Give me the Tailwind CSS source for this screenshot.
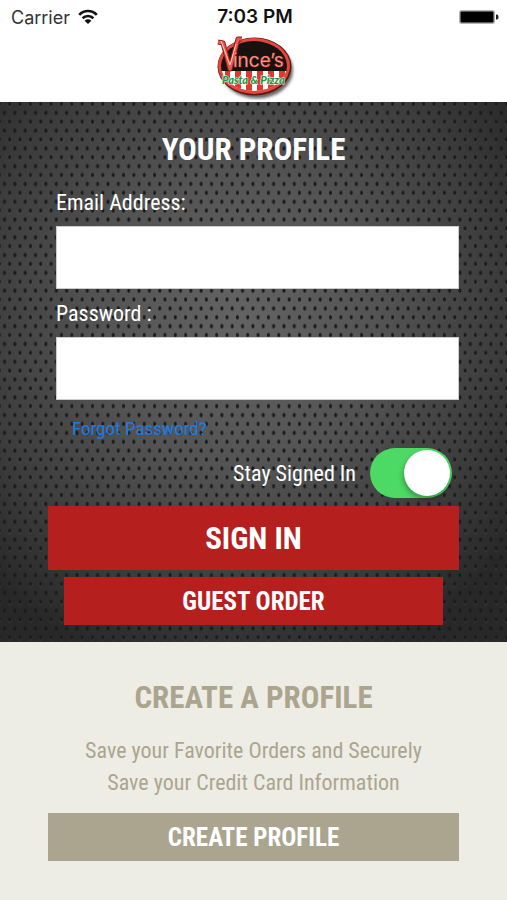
<!DOCTYPE html>
<html lang="en">
<head>
<meta charset="utf-8">
<meta name="viewport" content="width=device-width, initial-scale=1">
<title>Your Profile</title>
<script src="https://cdn.jsdelivr.net/npm/@tailwindcss/browser@4"></script>
</head>
<body class="min-h-screen flex flex-col bg-[#eeede5] font-['Roboto_Condensed','Roboto',sans-serif]">

<header class="h-[102px] bg-white flex flex-col">
  <div class="h-[34px] pl-[11px] pr-2 grid grid-cols-3 items-center font-['Inter',sans-serif] text-[#111]">
    <div class="flex items-center gap-2 text-[18px] text-[#333]">
      <span>Carrier</span>
      <svg class="w-5 h-4" viewBox="0 0 20 16" fill="none" stroke="#111" stroke-width="2.6" aria-label="Wi-Fi">
        <path d="M1.2 5.8C6.2.7 13.8.7 18.8 5.8"/>
        <path d="M4.6 9.3c3.1-3 7.7-3 10.8 0"/>
        <path d="M10 15 6.6 11.7c2-1.8 4.800-1.8 6.800 0Z" fill="#111" stroke="none"/>
      </svg>
    </div>
    <div class="text-center text-[19px] font-semibold whitespace-nowrap">7:03 PM</div>
    <svg class="w-10 h-4 justify-self-end" viewBox="0 0 40 16" aria-label="Battery">
      <rect x="0" y="1" width="36" height="14" rx="2.5" fill="#b5b5b5"/>
      <rect x="1.500" y="2.5" width="33" height="11" rx="1" fill="#000"/>
      <path d="M37 5.500h1q1.500 0 1.500 2.500t-1.500 2.500h-1z" fill="#222"/>
    </svg>
  </div>
  <svg class="w-[84px] h-[66px] mx-auto" viewBox="0 0 84 66" role="img" aria-label="Vince's Pasta &amp; Pizza">
    <defs>
      <clipPath id="plate"><ellipse cx="42" cy="32" rx="33" ry="25"/></clipPath>
      <filter id="soft" x="-20%" y="-20%" width="140%" height="140%"><feGaussianBlur stdDeviation="1.500"/></filter>
    </defs>
    <ellipse cx="45" cy="36" rx="36" ry="28.500" fill="#333" opacity=".75" filter="url(#soft)"/>
    <ellipse cx="42.500" cy="32.500" rx="37" ry="29" fill="#5c1512"/>
    <ellipse cx="42" cy="32" rx="36" ry="28" fill="#e2473c"/>
    <g clip-path="url(#plate)">
      <rect width="84" height="66" fill="#17120f"/>
      <rect y="37" width="84" height="30" fill="#fff"/>
      <path d="M13 37h5v24h-5zM23 37h6v24h-6zM34 37h6v24h-6zM45 37h6v24h-6zM56 37h6v24h-6zM67 37h6v24h-6z" fill="#dc3a30"/>
    </g>
    <path d="M6 8 11 9 18 35 26 5 30 5" fill="none" stroke="#8f1a15" stroke-width="5" stroke-linejoin="round"/>
    <path d="M6 8 11 9 18 35 26 5 30 5" fill="none" stroke="#e8594f" stroke-width="3" stroke-linejoin="round"/>
    <path d="M9 7 18 31 24 10" fill="none" stroke="#ffd1c8" stroke-width="1"/>
    <text x="21" y="33" font-family="Inter, sans-serif" font-size="19" fill="#f3b9ab" stroke="#d63c33" stroke-width=".6">ince’s</text>
    <text x="10" y="50" font-family="Lato, sans-serif" font-size="11" font-weight="900" font-style="italic" fill="#1a9a45" stroke="#fff" stroke-width="1" paint-order="stroke">Pasta &amp; Pizza</text>
  </svg>
</header>

<main class="flex-1 flex flex-col">
  <section class="relative isolate px-12 pb-[17px] text-white bg-[#333]">
    <svg class="absolute inset-0 -z-10 w-full h-full" aria-hidden="true">
      <defs>
        <radialGradient id="sheen" cx=".47" cy=".4" r=".68">
          <stop offset="0" stop-color="#636363"/>
          <stop offset=".4" stop-color="#545454"/>
          <stop offset=".75" stop-color="#3d3d3d"/>
          <stop offset="1" stop-color="#282828"/>
        </radialGradient>
        <pattern id="holes" x="4.500" y="-2.500" width="10.350" height="17.780" patternUnits="userSpaceOnUse">
          <ellipse cx="5.200" cy="5.300" rx="1.700" ry="2.600" fill="#6a6a6a" opacity=".25"/>
          <ellipse cx="5.200" cy="4.500" rx="1.500" ry="2.200" fill="#1a1a1a"/>
          <ellipse cx="0" cy="13.400" rx="1.500" ry="2.200" fill="#1a1a1a"/>
          <ellipse cx="10.350" cy="13.400" rx="1.500" ry="2.200" fill="#1a1a1a"/>
        </pattern>
      </defs>
      <rect width="100%" height="100%" fill="url(#sheen)"/>
      <rect width="100%" height="100%" fill="url(#holes)"/>
    </svg>

    <form>
      <h1 class="pt-6 h-[76px] text-[31px] leading-[48px] font-bold text-center">YOUR PROFILE</h1>
      <div class="pl-2">
        <label for="email" class="block h-12 text-[22px] leading-[50px]">Email Address:</label>
        <input id="email" type="email" class="block w-full h-[63px] px-3 bg-white border border-[#ccc] text-black text-[22px]">
        <label for="password" class="block h-12 text-[22px] leading-[50px]">Password :</label>
        <input id="password" type="password" class="block w-full h-[63px] px-3 bg-white border border-[#ccc] text-black text-[22px]">
      </div>
      <a href="#" class="block w-fit ml-6 h-12 text-[19px] leading-[58px] text-[#1a7be6]">Forgot Password?</a>
      <div class="flex items-center justify-end gap-[14px] h-[50px] pr-[7px]">
        <label for="stay" class="text-[22px]">Stay Signed In</label>
        <input id="stay" type="checkbox" role="switch" checked class="appearance-none w-[82px] h-[50px] rounded-full bg-[#4cd964] p-0.5 flex justify-end before:block before:size-[46px] before:rounded-full before:bg-white before:shadow-[-1px_3px_5px_rgba(0,0,0,0.3)]">
      </div>
      <button type="submit" class="block w-full h-16 mt-2 pt-0.5 bg-[#b5201e] text-[31px] font-bold">SIGN IN</button>
      <div class="px-4 mt-[7px]">
        <button type="button" class="block w-full h-12 pt-0.5 bg-[#b5201e] text-[25px] font-bold">GUEST ORDER</button>
      </div>
    </form>
  </section>

  <section class="px-12 pt-8 pb-10 text-center text-[#aba58f]">
    <h2 class="text-[31px] leading-[48px] font-bold">CREATE A PROFILE</h2>
    <p class="mt-[13px] text-[22px] leading-8">Save your Favorite Orders and Securely<br>Save your Credit Card Information</p>
    <button type="button" class="block w-full h-12 mt-[14px] pt-0.5 bg-[#aba58f] text-white text-[25px] font-bold">CREATE PROFILE</button>
  </section>
</main>
</body>
</html>
